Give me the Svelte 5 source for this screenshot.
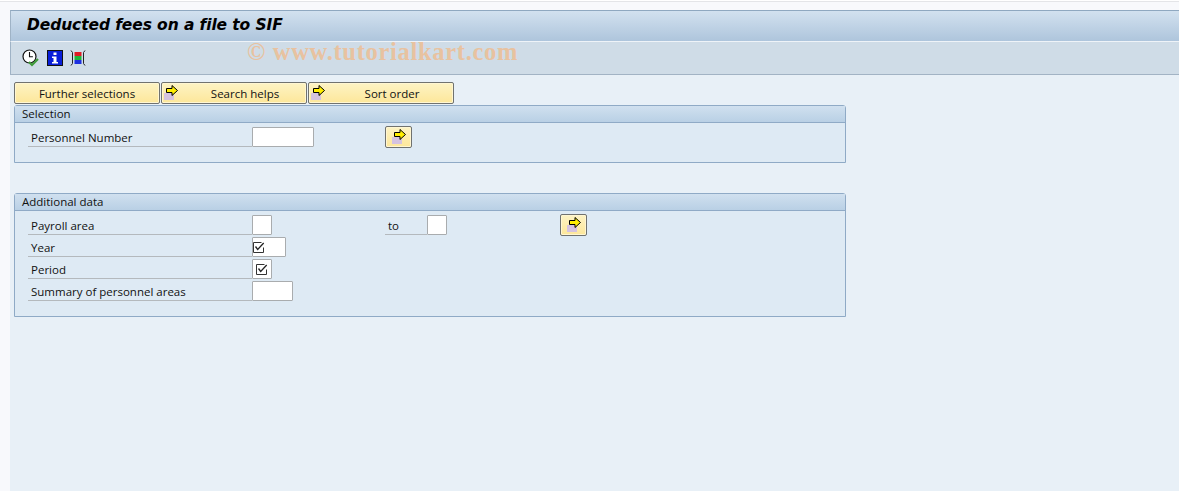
<script>
  const tabs = ['Further selections', 'Search helps', 'Sort order'];
</script>

{#snippet arrow()}
  <svg class="arrow" width="18" height="18" viewBox="0 0 18 18">
    <rect x="2" y="9" width="10" height="7" fill="#d5c3e0" />
    <path d="M4.5 4.5h5.5v-3l5.5 5-5.5 5v-3h-5.5z" fill="#ffee00" stroke="#000" stroke-width="1" />
  </svg>
{/snippet}

{#snippet check()}
  <svg width="12" height="11" viewBox="0 0 12 11">
    <path d="M10.5 5.5v5h-10v-10h8" fill="#fff" stroke="#333" />
    <path d="M2.5 4.5l2.2 3 6-6.5" fill="none" stroke="#222" stroke-width="1.3" />
  </svg>
{/snippet}

<div class="page">
  <div class="screen">
    <header class="title">Deducted fees on a file to SIF</header>

    <div class="toolbar">
      <svg width="18" height="18" viewBox="0 0 18 18">
        <circle cx="7.5" cy="7.5" r="6.5" fill="#fff" stroke="#111" stroke-width="1.2" />
        <path d="M7.5 3v4.8h3.4" fill="none" stroke="#111" stroke-width="1.1" />
        <path d="M7 13l3 3 6-6" fill="none" stroke="#3f9a3a" stroke-width="2.2" />
      </svg>
      <svg width="16" height="16" viewBox="0 0 16 16">
        <rect width="16" height="16" fill="#111" />
        <rect x="1" y="1" width="14" height="14" fill="#0a1fd8" />
        <path d="M6.5 2.5h3v2.5h-3zM5 6.5h4.5v5.5h1.5v1.5H5V12h1.5V8H5z" fill="#fff" />
      </svg>
      <svg width="16" height="16" viewBox="0 0 16 16">
        <rect x="4.5" y="2" width="7" height="4" fill="#e01b24" />
        <rect x="4.5" y="6" width="7" height="4" fill="#1fb53a" />
        <rect x="4.5" y="10" width="7" height="4" fill="#1c2fe0" />
        <path d="M1 0.5l1.5 2v11L1 15.5M15 0.5l-1.5 2v11l1.5 2" fill="none" stroke="#222" stroke-width="1" />
      </svg>
    </div>

    <div class="watermark">© www.tutorialkart.com</div>

    <main class="content">
      <div class="tabs">
        {#each tabs as tab, i}
          <button class="tab" class:has-icon={i > 0}>
            {#if i > 0}{@render arrow()}{/if}
            {tab}
          </button>
        {/each}
      </div>

      <section class="panel first">
        <h2>Selection</h2>
        <div class="rows">
          <div class="row">
            <span class="label">Personnel Number</span>
            <div class="slot"><span class="input w62"></span></div>
            <button class="icon-btn">{@render arrow()}</button>
          </div>
        </div>
      </section>

      <section class="panel second">
        <h2>Additional data</h2>
        <div class="rows">
          <div class="row">
            <span class="label">Payroll area</span>
            <div class="slot"><span class="input w20"></span></div>
            <span class="label to">to</span>
            <div class="slot"><span class="input w20"></span></div>
            <button class="icon-btn">{@render arrow()}</button>
          </div>
          <div class="row">
            <span class="label">Year</span>
            <div class="slot"><span class="input w34 left">{@render check()}</span></div>
          </div>
          <div class="row">
            <span class="label">Period</span>
            <div class="slot"><span class="input w20">{@render check()}</span></div>
          </div>
          <div class="row">
            <span class="label">Summary of personnel areas</span>
            <div class="slot"><span class="input w41"></span></div>
          </div>
        </div>
      </section>
    </main>
  </div>
</div>

<style>
  :global(body) {
    margin: 0;
    background: #fff;
  }

  .page {
    height: 492px;
    padding: 1px 0 1px 0;
    box-sizing: border-box;
  }

  .screen {
    position: relative;
    height: 100%;
    padding: 8px 0 0 10px;
    box-sizing: border-box;
    background: #f8f9fc;
    border-top: 1px solid #e4e5e8;
    font-family: 'Open Sans', 'Noto Sans', sans-serif;
    font-size: 11.5px;
    color: #111;
    display: flex;
    flex-direction: column;
  }

  .title {
    height: 32px;
    box-sizing: border-box;
    padding-left: 16px;
    border-top: 1px solid #8fa8c0;
    border-left: 1px solid #9fb3c6;
    border-bottom: 1px solid #eef3f8;
    background: linear-gradient(#d2e1ef, #aec5dc);
    font-family: 'DejaVu Sans', sans-serif;
    font-size: 15.5px;
    font-weight: 700;
    font-style: italic;
    letter-spacing: -0.1px;
    line-height: 29px;
    color: #000;
  }

  .toolbar {
    height: 33px;
    box-sizing: border-box;
    display: flex;
    align-items: center;
    gap: 7px;
    padding-left: 11px;
    padding-bottom: 1px;
    background: #cfdce7;
    border-left: 1px solid #9fb3c6;
    border-bottom: 1px solid #a2b3c4;
  }

  .watermark {
    position: absolute;
    left: 247px;
    top: 36px;
    font-family: 'Liberation Serif', serif;
    font-size: 24.5px;
    font-weight: 700;
    letter-spacing: 0.7px;
    color: #e8c2a0;
  }

  .content {
    flex: 1;
    background: #e8f0f7;
    padding: 7px 0 0 4px;
  }

  .tabs {
    display: flex;
    gap: 1px;
    margin-bottom: 1px;
  }

  .tab {
    position: relative;
    width: 146px;
    height: 22px;
    padding: 0;
    border: 1px solid #70726f;
    border-radius: 2px;
    background: linear-gradient(#fdf3c4, #fde79a);
    box-shadow: inset 0 0 0 1px #fff6d2;
    font: inherit;
    color: #111;
    text-align: center;
  }

  .tab.has-icon {
    padding-left: 22px;
  }

  .tab .arrow {
    position: absolute;
    left: 0;
    top: 1px;
  }

  .panel {
    width: 832px;
    box-sizing: border-box;
    border: 1px solid #8faac6;
    border-radius: 3px 3px 0 0;
    background: #deeaf4;
  }

  .panel.first {
    height: 58px;
    margin-bottom: 30px;
  }

  .panel.second {
    height: 124px;
  }

  h2 {
    height: 17px;
    margin: 0;
    padding-left: 7px;
    box-sizing: border-box;
    border-bottom: 1px solid #8faac6;
    background: linear-gradient(#d0e0ef, #b9d0e5);
    font-size: 11.5px;
    font-weight: 400;
    line-height: 15px;
  }

  .rows {
    display: flex;
    flex-direction: column;
    gap: 2px;
    padding: 4px 0 0 13px;
  }

  .row {
    display: flex;
    height: 20px;
    align-items: flex-start;
  }

  .label {
    width: 224px;
    height: 20px;
    box-sizing: border-box;
    padding-left: 3px;
    border-bottom: 1px solid #b4b9bd;
    line-height: 21px;
    flex-shrink: 0;
  }

  .label.to {
    width: 42px;
  }

  .slot {
    width: 133px;
    flex-shrink: 0;
  }

  .input {
    display: flex;
    align-items: center;
    justify-content: center;
    height: 20px;
    box-sizing: border-box;
    border: 1px solid #a9acae;
    border-radius: 1px;
    background: #fff;
  }

  .input.left {
    justify-content: flex-start;
  }

  .w20 {
    width: 20px;
  }

  .w34 {
    width: 34px;
  }

  .w41 {
    width: 41px;
  }

  .w62 {
    width: 62px;
  }

  .icon-btn {
    display: flex;
    align-items: center;
    justify-content: center;
    width: 27px;
    height: 22px;
    margin-top: -1px;
    padding: 0;
    border: 1px solid #70726f;
    border-radius: 2px;
    background: linear-gradient(#fdf3c4, #fde79a);
    box-shadow: inset 0 0 0 1px #fff6d2;
  }
</style>
